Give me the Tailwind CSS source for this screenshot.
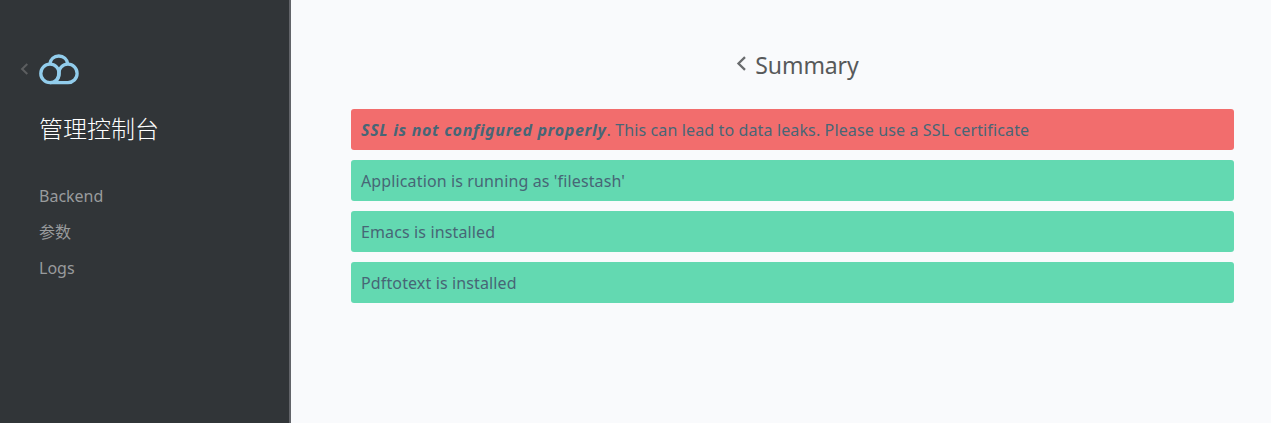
<!DOCTYPE html>
<html lang="zh">
<head>
<meta charset="utf-8">
<title>管理控制台</title>
<script src="https://cdn.jsdelivr.net/npm/@tailwindcss/browser@4"></script>
</head>
<body class="flex h-screen overflow-hidden bg-[#f9fafc] font-['Noto_Sans','Noto_Sans_CJK_SC',sans-serif] text-base text-[#476676]">
  <aside class="w-[291px] shrink-0 border-r-2 border-[#626469] bg-[#313538] pt-[53px]">
    <div class="flex h-8 items-center pl-5">
      <svg class="mr-[10px] h-3 w-[9px]" viewBox="0 0 9 12" fill="none" stroke="#5c5e60" stroke-width="2"><path d="M7.3 1 2.1 6l5.2 5"/></svg>
      <svg class="h-8 w-10" viewBox="0 0 40 32" fill="none" stroke="#92cdec" stroke-width="3.3" stroke-linejoin="round"><circle cx="11" cy="20.4" r="9.2"/><path d="M10.8 11C11.4 6 15 3 19.8 3S28.2 6 28.8 11"/><path d="M11 29.6H28.8A9.2 9.2 0 1 0 19.7 20.4C19.7 24 18.6 26.8 16 29.6"/></svg>
    </div>
    <h2 class="mt-[27px] pl-[39px] text-2xl font-light leading-8 text-white font-['Noto_Sans_CJK_SC',sans-serif]">管理控制台</h2>
    <nav class="mt-[34px] flex flex-col pl-[39px] leading-9 text-[#999b9d]">
      <a>Backend</a>
      <a>参数</a>
      <a>Logs</a>
    </nav>
  </aside>
  <main class="flex-1 pl-[60px] pr-[37px] pt-[47px]">
    <h2 class="flex h-9 items-center justify-center pl-[10px] text-[23px] text-[#57595a]">
      <svg class="mr-2 mb-1 h-[15px] w-[11px]" viewBox="0 0 11 15" fill="none" stroke="#6a6c6e" stroke-width="2.3"><path d="M9 1.2 2.5 7.5 9 13.8"/></svg>
      <span class="tracking-[-0.1px]">Summary</span>
    </h2>
    <div class="mt-[26px] flex flex-col gap-[10px] leading-[21px] tracking-[0.13px]">
      <div class="rounded-[3px] bg-[#f26d6d] pt-[11px] pb-[9px] px-[10px]"><b class="tracking-[0.68px]"><i>SSL is not configured properly</i></b><span>. This can lead to data leaks. Please use a SSL certificate</span></div>
      <div class="rounded-[3px] bg-[#63d9b1] pt-[11px] pb-[9px] px-[10px]">Application is running as 'filestash'</div>
      <div class="rounded-[3px] bg-[#63d9b1] pt-[11px] pb-[9px] px-[10px]">Emacs is installed</div>
      <div class="rounded-[3px] bg-[#63d9b1] pt-[11px] pb-[9px] px-[10px]">Pdftotext is installed</div>
    </div>
  </main>
</body>
</html>
